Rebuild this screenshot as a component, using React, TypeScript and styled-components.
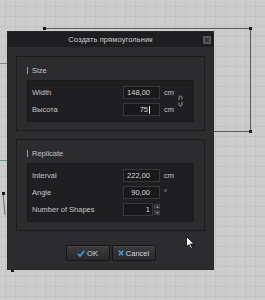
import React from "react";
import styled, { createGlobalStyle } from "styled-components";

const Global = createGlobalStyle`
  html, body { margin: 0; padding: 0; }
  body {
    width: 265px;
    height: 300px;
    overflow: hidden;
    background-color: #cccccc;
    background-image:
      linear-gradient(to right, #c4c4c4 1px, transparent 1px),
      linear-gradient(to bottom, #c4c4c4 1px, transparent 1px);
    background-size: 10px 10px;
    background-position: 5px 6px;
    font-family: "Liberation Sans", Arial, sans-serif;
  }
`;

const Canvas = styled.div`
  position: relative;
  width: 265px;
  height: 300px;
`;

const Drawing = styled.svg`
  position: absolute;
  left: 0;
  top: 0;
`;

const Dialog = styled.div`
  position: absolute;
  left: 8px;
  top: 32px;
  width: 205px;
  height: 237px;
  display: flex;
  flex-direction: column;
  background: #2c2c2e;
  box-shadow: 0 0 0 1px #262628;
`;

const TitleBar = styled.div`
  position: relative;
  height: 15px;
  flex: none;
  display: flex;
  align-items: center;
  justify-content: center;
  background: #1e1e20;
  color: #cfcfcf;
  font-size: 7.5px;
  letter-spacing: 0.1px;
`;

const CloseButton = styled.div`
  position: absolute;
  right: 2px;
  top: 4px;
  width: 8px;
  height: 8px;
  background: #58585a;
  display: flex;
  align-items: center;
  justify-content: center;
`;

const Body = styled.div`
  flex: 1;
  display: flex;
  flex-direction: column;
  padding: 9px 8px 8px;
`;

const Group = styled.div<{ $gapAfter?: number }>`
  border: 1px solid #1c1c1d;
  padding: 9px 10px 8px;
  margin-bottom: ${(p) => p.$gapAfter ?? 0}px;
  display: flex;
  flex-direction: column;
`;

const GroupLabel = styled.div`
  height: 8px;
  display: flex;
  align-items: center;
  gap: 4px;
  color: #c2c2c2;
  font-size: 7.5px;
  margin-bottom: 6px;
  &::before {
    content: "";
    width: 1px;
    height: 7px;
    background: #9a9a9a;
  }
`;

const Panel = styled.div`
  background: #1f1f21;
  border: 1px solid #1a1a1b;
  padding: 5px 0 5px 4px;
  display: grid;
  grid-template-columns: 87px 37px auto 1fr;
  column-gap: 4px;
  row-gap: 4px;
  align-items: center;
`;

const Label = styled.div`
  color: #c4c4c4;
  font-size: 7.5px;
  line-height: 13px;
  white-space: nowrap;
`;

const Field = styled.div`
  box-sizing: border-box;
  height: 13px;
  background: #18181a;
  border: 1px solid #38383a;
  color: #d8d8d8;
  font-size: 7.5px;
  line-height: 11px;
  text-align: right;
  padding-right: 9px;
  display: flex;
  justify-content: flex-end;
  align-items: center;
  flex: 1;
`;

const Caret = styled.span`
  display: inline-block;
  width: 1px;
  height: 8px;
  background: #e8e8e8;
  margin-left: 1px;
`;

const NumberBox = styled.div`
  display: flex;
  gap: 1px;
  height: 13px;
`;

const SpinField = styled(Field)`
  padding-right: 2px;
`;

const Spinner = styled.div`
  width: 6px;
  display: flex;
  flex-direction: column;
  justify-content: center;
  gap: 1px;
`;

const SpinButton = styled.div`
  height: 5px;
  background: #3c3c3e;
  display: flex;
  align-items: center;
  justify-content: center;
`;

const Unit = styled.div`
  color: #c4c4c4;
  font-size: 7.5px;
  line-height: 13px;
`;

const LinkCell = styled.div`
  grid-column: 4;
  grid-row: 1 / span 2;
  display: flex;
  align-items: center;
`;

const Footer = styled.div`
  margin-top: auto;
  display: flex;
  justify-content: center;
  gap: 2px;
`;

const Button = styled.div`
  box-sizing: border-box;
  width: 44px;
  height: 16px;
  border: 1px solid #161617;
  border-radius: 2px;
  background: linear-gradient(#3c3c3e, #29292b);
  box-shadow: inset 0 1px 0 #48484a;
  display: flex;
  align-items: center;
  justify-content: center;
  gap: 2px;
  color: #d6d6d6;
  font-size: 7.5px;
`;

const LinkIcon = () => (
  <svg width="5" height="12" viewBox="0 0 5 12">
    <path d="M1 5 V2.5 A1.5 1.5 0 0 1 4 2.5 V4.5" fill="none" stroke="#a8a8a8" strokeWidth="0.9" />
    <path d="M4 7 V9.5 A1.5 1.5 0 0 1 1 9.5 V7.5" fill="none" stroke="#a8a8a8" strokeWidth="0.9" />
  </svg>
);

const Arrow = ({ up }: { up?: boolean }) => (
  <svg width="3" height="2" viewBox="0 0 3 2">
    <path d={up ? "M0 2 L1.5 0 L3 2 Z" : "M0 0 L1.5 2 L3 0 Z"} fill="#8a8a8a" />
  </svg>
);

export default function App() {
  return (
    <>
      <Global />
      <Canvas>
        <Drawing width="265" height="300" viewBox="0 0 265 300">
          <g stroke="#5a5a5a" strokeWidth="1" fill="none">
            <line x1="44" y1="28.5" x2="250" y2="28.5" />
            <line x1="250.5" y1="28" x2="250.5" y2="131" />
            <line x1="213" y1="131.5" x2="250" y2="131.5" />
            <line x1="0" y1="63.5" x2="8" y2="63.5" stroke="#7d8c86" />
            <line x1="0" y1="160.5" x2="8" y2="160.5" stroke="#5f9c88" />
            <line x1="3" y1="193" x2="5" y2="215" stroke="#6a6a6a" />
          </g>
          <g fill="#1a1a1a">
            <rect x="43" y="27" width="3" height="3" />
            <rect x="249" y="27" width="3" height="3" />
            <rect x="249" y="130" width="3" height="3" />
            <rect x="2" y="192" width="3" height="3" />
            <rect x="11" y="269" width="3" height="3" />
          </g>
        </Drawing>
        <Dialog>
          <TitleBar>
            Создать прямоугольник
            <CloseButton>
              <svg width="6" height="6" viewBox="0 0 6 6">
                <path d="M1 1 L5 5 M5 1 L1 5" stroke="#2a2a2a" strokeWidth="1.2" />
              </svg>
            </CloseButton>
          </TitleBar>
          <Body>
            <Group $gapAfter={8}>
              <GroupLabel>Size</GroupLabel>
              <Panel>
                <Label>Width</Label>
                <Field>148,00</Field>
                <Unit>cm</Unit>
                <LinkCell>
                  <LinkIcon />
                </LinkCell>
                <Label>Высота</Label>
                <Field>
                  75
                  <Caret />
                </Field>
                <Unit>cm</Unit>
              </Panel>
            </Group>
            <Group>
              <GroupLabel>Replicate</GroupLabel>
              <Panel>
                <Label>Interval</Label>
                <Field>222,00</Field>
                <Unit>cm</Unit>
                <span />
                <Label>Angle</Label>
                <Field>90,00</Field>
                <Unit>°</Unit>
                <span />
                <Label>Number of Shapes</Label>
                <NumberBox>
                  <SpinField>1</SpinField>
                  <Spinner>
                    <SpinButton>
                      <Arrow up />
                    </SpinButton>
                    <SpinButton>
                      <Arrow />
                    </SpinButton>
                  </Spinner>
                </NumberBox>
                <span />
                <span />
              </Panel>
            </Group>
            <Footer>
              <Button>
                <svg width="8" height="7" viewBox="0 0 8 7">
                  <path d="M0.8 3.8 L3 6 L7.2 1" fill="none" stroke="#3f9fe8" strokeWidth="1.6" />
                </svg>
                OK
              </Button>
              <Button>
                <svg width="6" height="6" viewBox="0 0 6 6">
                  <path d="M0.8 0.8 L5.2 5.2 M5.2 0.8 L0.8 5.2" stroke="#3f9fe8" strokeWidth="1.5" />
                </svg>
                Cancel
              </Button>
            </Footer>
          </Body>
        </Dialog>
        <Drawing width="265" height="300" viewBox="0 0 265 300">
          <path
            d="M186.5 236.5 V247 L189 244.5 L190.8 248.5 L192.3 247.8 L190.6 244 H194 Z"
            fill="#ffffff"
            stroke="#000000"
            strokeWidth="0.8"
          />
        </Drawing>
      </Canvas>
    </>
  );
}
